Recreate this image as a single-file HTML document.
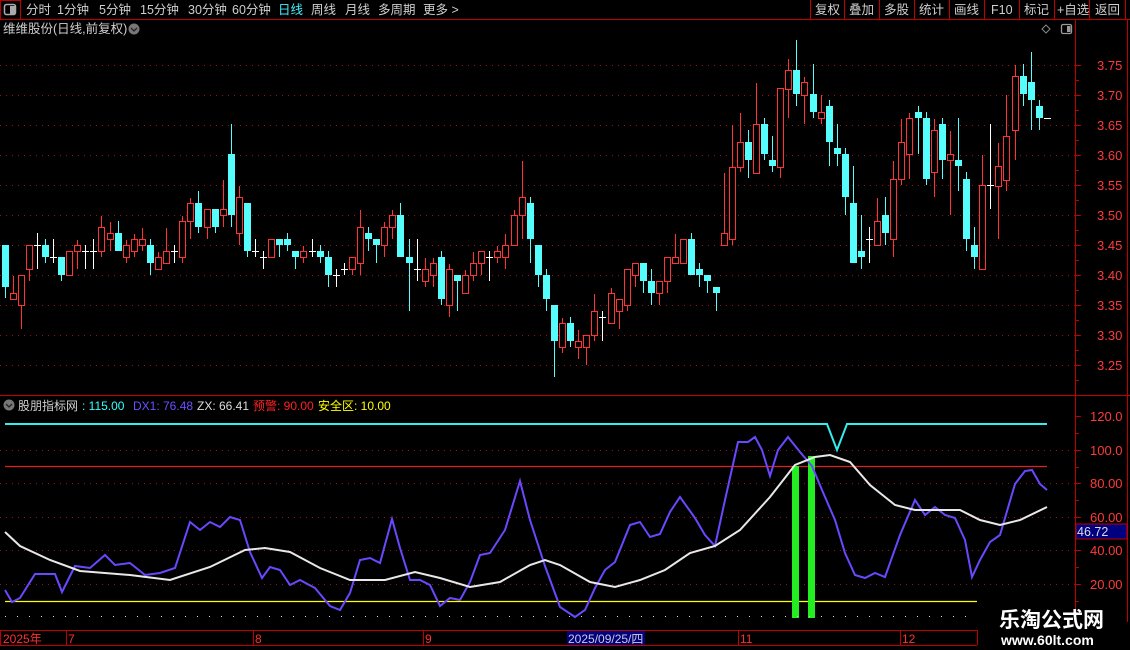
<!DOCTYPE html>
<html><head><meta charset="utf-8"><style>
html,body{margin:0;padding:0;background:#000;width:1130px;height:650px;overflow:hidden;}
svg{display:block}
text{font-family:"Liberation Sans","Noto Sans CJK SC",sans-serif;}
</style></head><body>
<svg id="s" width="1130" height="650" xmlns="http://www.w3.org/2000/svg">
<rect width="1130" height="650" fill="#000"/>
<line x1="0" y1="19.5" x2="1130" y2="19.5" stroke="#c00000"/>
<rect x="0.5" y="0.5" width="20" height="19" fill="none" stroke="#c00000"/>
<rect x="4.5" y="4.5" width="11" height="10" rx="2" fill="none" stroke="#aaa" stroke-width="1.5"/>
<rect x="10" y="6" width="5" height="8" fill="#aaa"/>
<g font-size="12.5" fill="#cfcfcf">
<text x="26" y="14">分时</text><text x="57" y="14">1分钟</text><text x="99" y="14">5分钟</text><text x="140" y="14">15分钟</text><text x="188" y="14">30分钟</text><text x="232" y="14">60分钟</text>
<text x="278" y="14" fill="#4ef">日线</text><text x="311" y="14">周线</text><text x="345" y="14">月线</text><text x="378" y="14">多周期</text><text x="423" y="14">更多 &gt;</text>
</g>
<g stroke="#c00000"><line x1="810.5" y1="0" x2="810.5" y2="19"/><line x1="844.5" y1="0" x2="844.5" y2="19"/><line x1="879.5" y1="0" x2="879.5" y2="19"/><line x1="914.5" y1="0" x2="914.5" y2="19"/><line x1="949.5" y1="0" x2="949.5" y2="19"/><line x1="984.5" y1="0" x2="984.5" y2="19"/><line x1="1019.5" y1="0" x2="1019.5" y2="19"/><line x1="1054.5" y1="0" x2="1054.5" y2="19"/><line x1="1089.5" y1="0" x2="1089.5" y2="19"/><line x1="1125.5" y1="0" x2="1125.5" y2="19"/></g>
<g font-size="12.5" fill="#cfcfcf">
<text x="815" y="14">复权</text><text x="849" y="14">叠加</text><text x="884" y="14">多股</text><text x="919" y="14">统计</text><text x="954" y="14">画线</text><text x="991" y="14">F10</text><text x="1024" y="14">标记</text><text x="1057" y="14">+自选</text><text x="1095" y="14">返回</text>
</g>
<text x="3" y="33" font-size="12.5" fill="#cfcfcf">维维股份(日线,前复权)</text>
<circle cx="134" cy="29" r="5.5" fill="#777"/><path d="M131 28l3 3 3-3" stroke="#222" fill="none" stroke-width="1.3"/>
<path d="M1046 25l4 4-4 4-4-4z" fill="none" stroke="#888"/>
<rect x="1061.5" y="24.5" width="10" height="9" rx="1.5" fill="none" stroke="#999" stroke-width="1.3"/><rect x="1067" y="26" width="3.5" height="6" fill="#999"/>
<line x1="1075.5" y1="20" x2="1075.5" y2="622" stroke="#c00000"/>
<line x1="1127.5" y1="20" x2="1127.5" y2="622" stroke="#c00000"/>
<line x1="0" y1="395.5" x2="1130" y2="395.5" stroke="#c00000"/>
<g id="grid"></g>
<g id="cand"></g>
<circle cx="9" cy="405" r="5.5" fill="#777"/><path d="M6 404l3 3 3-3" stroke="#222" fill="none" stroke-width="1.3"/>
<g font-size="12">
<text x="18" y="410" fill="#cfcfcf">股朋指标网</text>
<text x="82" y="410" fill="#3ff">: 115.00</text>
<text x="133" y="410" fill="#6a50ff">DX1: 76.48</text>
<text x="197" y="410" fill="#ddd">ZX: 66.41</text>
<text x="253" y="410" fill="#ff2020">预警: 90.00</text>
<text x="318" y="410" fill="#ff0">安全区: 10.00</text>
</g>
<line x1="5" y1="466.5" x2="1047" y2="466.5" stroke="#e02020" stroke-width="1.3"/>
<line x1="5" y1="601.5" x2="977" y2="601.5" stroke="#ff0" stroke-width="1.2"/>
<polyline points="5,424 827,424 837,450 847,424 1047,424" fill="none" stroke="#3ee" stroke-width="2"/>
<rect x="792" y="466" width="7" height="152" fill="#22ee22"/>
<rect x="808" y="456" width="7" height="162" fill="#22ee22"/>
<polyline fill="none" stroke="#6a48ff" stroke-width="2" points="5,590 12,602 20,598 35,574 55,574 62,592 75,566 90,568 105,555 115,565 130,563 145,575 160,573 175,568 190,522 200,530 210,522 220,527 230,517 240,520 250,552 262,578 270,567 280,570 290,585 300,580 315,588 330,606 340,610 350,593 360,560 370,558 380,563 392,519 400,548 410,580 420,580 430,585 440,606 450,598 460,600 470,582 480,555 490,553 505,530 520,481 530,520 545,566 560,607 575,617 585,610 595,588 605,570 615,562 630,525 640,522 650,537 660,534 670,512 680,497 695,518 705,535 715,546 725,500 738,442 748,442 755,437 762,450 770,476 778,450 788,437 800,452 812,466 822,490 835,520 845,553 855,575 865,578 875,573 885,577 900,535 915,500 925,515 935,507 945,515 955,518 965,540 972,577 980,560 990,542 1000,535 1015,484 1025,471 1032,470 1040,484 1047,490"/>
<polyline fill="none" stroke="#e8e8e8" stroke-width="2" points="5,532 20,546 50,560 80,571 130,575 170,580 210,567 245,550 265,548 290,552 320,568 350,580 385,580 415,572 440,578 470,587 500,582 530,565 545,560 560,565 590,582 615,587 640,580 665,570 690,553 715,546 740,530 770,497 795,465 815,457 830,455 850,462 870,485 895,505 915,510 960,510 980,520 1000,525 1020,520 1047,507"/>
<line x1="5" y1="616.5" x2="977" y2="616.5" stroke="#ddd" stroke-dasharray="1,11"/>
<rect x="1076" y="524" width="51" height="15" fill="#000080" stroke="#c00000"/>
<text x="1077" y="536" font-size="12.5" fill="#ddd">46.72</text>
<line x1="0" y1="630.5" x2="977" y2="630.5" stroke="#c00000"/>
<line x1="0" y1="645.5" x2="977" y2="645.5" stroke="#c00000"/>
<line x1="977.5" y1="630" x2="977.5" y2="645" stroke="#c00000"/>
<g stroke="#c00000"><line x1="0.5" y1="630" x2="0.5" y2="645"/><line x1="66.5" y1="630" x2="66.5" y2="645"/><line x1="253.5" y1="630" x2="253.5" y2="645"/><line x1="423.5" y1="630" x2="423.5" y2="645"/><line x1="738.5" y1="630" x2="738.5" y2="645"/><line x1="900.5" y1="630" x2="900.5" y2="645"/></g>
<rect x="567" y="631" width="78" height="14" fill="#000080"/>
<g font-size="12" fill="#ff3030"><text x="3" y="643">2025年</text><text x="68" y="643">7</text><text x="255" y="643">8</text><text x="425" y="643">9</text><text x="740" y="643">11</text><text x="902" y="643">12</text></g>
<text x="568" y="643" font-size="12" fill="#ccc">2025/09/25/四</text>
<text x="999" y="627" font-size="21" font-weight="bold" fill="#fff" font-family="'Noto Sans CJK SC',sans-serif">乐淘公式网</text>
<text x="1001" y="645" font-size="14" font-weight="bold" fill="#fff" font-family="'Liberation Serif',serif">www.60lt.com</text>
</svg>
<script>
var NS="http://www.w3.org/2000/svg",g=document.getElementById('grid'),cg=document.getElementById('cand');
function el(p,t,a){var e=document.createElementNS(NS,t);for(var k in a)e.setAttribute(k,a[k]);p.appendChild(e);return e;}
var pl=["3.75","3.70","3.65","3.60","3.55","3.50","3.45","3.40","3.35","3.30","3.25"];
for(var i=0;i<11;i++){var y=65+30*i;el(g,'line',{x1:0,y1:y+.5,x2:1075,y2:y+.5,stroke:'#a01010','stroke-dasharray':'1,5'});
el(g,'line',{x1:1075,y1:y+.5,x2:1081,y2:y+.5,stroke:'#c00000'});el(g,'line',{x1:1075,y1:y+15.5,x2:1079,y2:y+15.5,stroke:'#c00000'});
var t=el(g,'text',{x:1097,y:y+5,'font-size':13,fill:'#ff3a3a'});t.textContent=pl[i];}
var il=["120.0","100.0","80.00","60.00","40.00","20.00"],iy=[416,450,483,517,550,584];
for(var i=0;i<6;i++){var y=iy[i];if(i>0)el(g,'line',{x1:0,y1:y+.5,x2:1075,y2:y+.5,stroke:'#a01010','stroke-dasharray':'1,5'});
el(g,'line',{x1:1075,y1:y+.5,x2:1081,y2:y+.5,stroke:'#c00000'});el(g,'line',{x1:1075,y1:y+17.5,x2:1079,y2:y+17.5,stroke:'#c00000'});
var t=el(g,'text',{x:1090,y:y+5,'font-size':13,fill:'#ff3a3a'});t.textContent=il[i];}
var D=[
['c',245,287,245,298],['r',293,299,276,299],['r',275,305,275,329],['r',245,269,245,281],['w',245,245,233,269],['c',245,257,239,263],['w',257,257,239,263],['c',257,275,257,281],['r',251,275,251,275],['r',245,251,240,269],
['w',251,251,245,269],['w',251,251,239,269],['r',227,251,216,257],['r',233,239,222,251],['c',233,251,221,251],['r',245,257,240,263],['r',239,251,234,257],['r',239,245,228,251],['c',245,263,239,275],['r',257,269,252,269],
['r',251,263,228,263],['w',251,251,245,263],['r',221,257,216,263],['r',203,221,198,239],['c',203,227,191,233],['r',209,227,209,239],['c',209,227,209,233],['r',209,215,180,227],['c',154,215,124,227],['r',197,233,186,245],
['c',203,251,203,257],['w',251,251,239,257],['w',257,257,251,269],['r',239,257,239,257],['c',239,245,239,257],['c',239,245,233,251],['c',251,257,251,269],['r',251,257,246,263],['w',251,251,239,257],['c',251,257,245,263],
['c',257,275,251,287],['w',275,275,269,287],['w',269,269,263,275],['r',257,269,257,275],['r',227,263,210,275],['c',233,239,227,251],['c',239,245,239,263],['r',227,245,222,257],['r',215,227,210,239],['c',215,257,203,257],
['c',257,263,239,311],['w',269,269,239,281],['r',269,281,258,287],['r',263,275,258,287],['c',257,299,251,305],['r',269,305,264,317],['c',275,281,275,311],['r',275,293,270,293],['r',263,275,252,281],['r',251,263,251,275],
['w',257,257,251,281],['r',251,257,246,263],['r',245,257,234,269],['r',215,245,210,245],['r',197,215,161,239],['c',203,239,197,263],['c',245,275,245,287],['c',275,299,269,311],['c',305,341,305,377],['r',323,347,318,353],
['c',323,341,317,347],['r',341,347,330,359],['r',335,347,335,365],['r',311,335,294,341],['w',317,317,311,341],['r',293,323,288,323],['r',299,311,299,329],['r',269,305,269,311],['r',263,275,263,287],['c',263,281,263,293],
['c',281,293,269,305],['r',281,293,281,305],['r',257,281,257,293],['r',257,263,234,263],['r',239,263,239,263],['c',239,275,233,275],['c',269,275,263,287],['c',275,281,275,293],['c',287,293,287,311],
['r',233,245,173,245],['r',167,239,125,245],['r',142,167,113,172],['c',142,160,130,178],['r',124,173,83,173],['c',124,154,118,160],['c',160,166,136,172],['r',88,167,88,178],['r',70,89,59,118],['c',70,94,40,106],
['r',82,95,77,124],['c',94,112,64,118],['r',112,118,95,124],['c',106,142,100,166],['c',148,154,124,166],['c',154,197,148,215],['c',203,263,166,263],['c',251,257,215,269],['w',239,239,227,263],['r',221,245,198,245],
['c',215,233,197,245],['r',179,239,161,257],['r',142,179,119,185],['r',118,154,113,179],['c',112,118,106,154],['c',118,179,112,185],['r',130,172,119,197],['c',124,160,118,179],['r',154,160,131,215],['c',160,166,118,191],
['c',179,239,172,251],['c',245,257,227,269],['r',185,269,155,269],['w',185,185,124,209],['r',166,186,143,239],['r',136,180,95,191],['r',76,130,65,160],['c',76,94,64,106],['c',82,100,52,130],['c',106,118,100,130],['w',118,118,118,118]];
for(var i=0;i<D.length;i++){var d=D[i],x=Math.round(4.5+8.08*i)+.5,c=d[0]=='r'?'#ff3333':d[0]=='c'?'#55fdfd':'#fff';
if(d[3]<d[4])el(cg,'line',{x1:x,y1:d[3],x2:x,y2:d[4],stroke:c});
if(d[0]=='w'){el(cg,'line',{x1:x-3.5,y1:d[1]+.5,x2:x+3.5,y2:d[1]+.5,stroke:c});}
else if(d[0]=='r'){el(cg,'rect',{x:x-3,y:d[1]+.5,width:6,height:Math.max(1,d[2]-d[1]),fill:'#000',stroke:c});}
else{el(cg,'rect',{x:x-3.5,y:d[1],width:7,height:Math.max(2,d[2]-d[1]),fill:c});}}
</script>
</body></html>
